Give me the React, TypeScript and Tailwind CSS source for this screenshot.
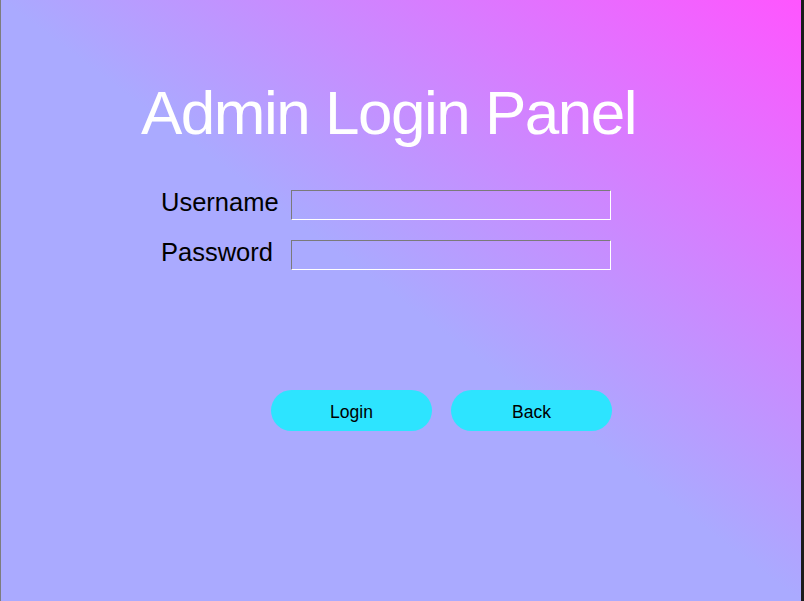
export default function App() {
  return (
    <div
      className="w-[804px] h-[601px] overflow-hidden flex bg-[#1b1b1b]"
      style={{ fontFamily: '"Liberation Sans", Arial, sans-serif' }}
    >
      <div className="w-px bg-[#7d7d7d]" />
      <div className="w-[800px] h-full bg-[linear-gradient(to_bottom_left,#ff55ff_0%,#aaaaff_50%,#aaaaff_100%)]">
        <div className="pt-[82px] pl-[140px]">
          <h1 className="text-[62px] leading-none text-white tracking-[-1.5px]">Admin Login Panel</h1>
        </div>

        <div className="mt-[46px] ml-[160px] grid grid-cols-[130px_320px] gap-y-[20px]">
          <label className="text-[25.5px] leading-none text-black">Username</label>
          <input
            type="text"
            className="h-[30px] bg-transparent border border-t-[#7a7a7a] border-l-[#7a7a7a] border-b-white border-r-white outline-none"
          />
          <label className="text-[25.5px] leading-none text-black">Password</label>
          <input
            type="password"
            className="h-[30px] bg-transparent border border-t-[#7a7a7a] border-l-[#7a7a7a] border-b-white border-r-white outline-none"
          />
        </div>

        <div className="mt-[120px] ml-[270px] flex gap-[19px]">
          <button className="w-[161px] h-[41px] pt-[3px] rounded-full bg-[#2de4ff] text-[17.5px] text-black">Login</button>
          <button className="w-[161px] h-[41px] pt-[3px] rounded-full bg-[#2de4ff] text-[17.5px] text-black">Back</button>
        </div>
      </div>
    </div>
  );
}
